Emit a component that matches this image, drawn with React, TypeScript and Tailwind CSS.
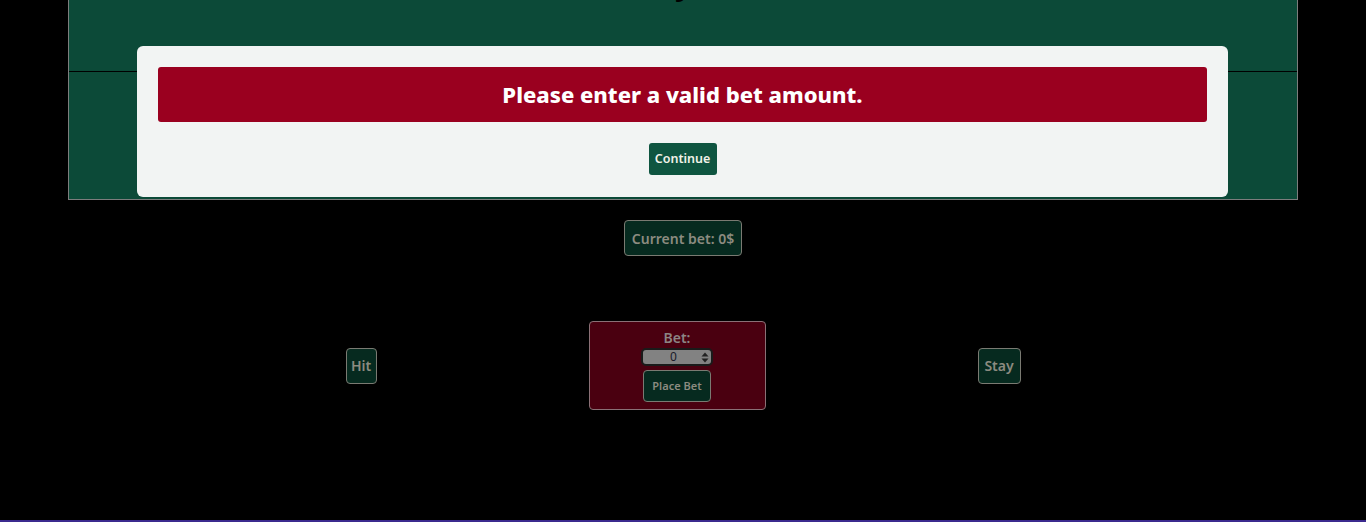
import { useState } from "react";

const font = { fontFamily: '"Noto Sans", "Open Sans", sans-serif' };

function Spinner() {
  return (
    <svg width="8" height="11" viewBox="0 0 8 11" className="shrink-0">
      <path d="M4 0.5 L7.5 4.5 H0.5 Z" fill="#222" />
      <path d="M4 10.5 L7.5 6.5 H0.5 Z" fill="#222" />
    </svg>
  );
}

export default function App() {
  const [bet] = useState(0);
  const [showModal, setShowModal] = useState(true);

  return (
    <div className="relative min-h-[522px] bg-black flex flex-col" style={font}>
      {/* table */}
      <div className="mx-[68px] h-[200px] bg-[#0c4a38] border-x border-b border-[#7d7d7d] flex flex-col">
        <div className="h-[72px] border-b border-black overflow-hidden">
          <h1 className="-mt-[34px] text-center text-[30px] font-bold text-black leading-[36px] pr-[10px]">
            Royal
          </h1>
        </div>
        <div className="flex-1" />
      </div>

      <div className="flex justify-center mt-[20px]">
        <div className="h-[36px] px-[7px] flex items-center rounded-[4px] border border-[#7a7a72] bg-[#062a1f] text-[#8c8b80] text-[14px] font-semibold">
          Current bet: {bet}$
        </div>
      </div>

      <div className="flex justify-center items-center gap-[212px] mt-[65px]">
        <button className="h-[36px] w-[31px] rounded-[4px] border border-[#7a7a72] bg-[#062a1f] text-[#8c8b80] text-[14px] font-semibold">
          Hit
        </button>
        <div className="w-[177px] h-[89px] rounded-[4px] border border-[#8a7076] bg-[#4a0010] flex flex-col items-center pt-[7px]">
          <span className="text-[14px] font-semibold text-[#8c8584] leading-[18px]">Bet:</span>
          <div className="mt-[1px] w-[72px] h-[18px] rounded-[5px] border-2 border-[#1a1a1a] bg-[#828282] flex items-center pl-[3px] pr-[2px]">
            <span className="flex-1 text-center text-[12px] text-[#1a1a2a] leading-none">0</span>
            <Spinner />
          </div>
          <button className="mt-[4px] w-[68px] h-[32px] rounded-[4px] border border-[#7a7a72] bg-[#062a1f] text-[#8c8b80] text-[11px] font-semibold">
            Place Bet
          </button>
        </div>
        <button className="h-[36px] w-[43px] rounded-[4px] border border-[#7a7a72] bg-[#062a1f] text-[#8c8b80] text-[14px] font-semibold">
          Stay
        </button>
      </div>

      <div className="mt-auto h-[2px] bg-[#3b2a8e]" />

      {showModal && (
        <div className="absolute left-[137px] right-[138px] top-[46px] h-[151px] rounded-[6px] bg-[#f2f4f3] px-[21px] pt-[21px] flex flex-col items-center">
          <div className="w-full h-[55px] rounded-[3px] bg-[#9a001f] flex items-center justify-center text-white text-[22px] font-extrabold">
            Please enter a valid bet amount.
          </div>
          <button
            onClick={() => setShowModal(false)}
            className="mt-[21px] w-[68px] h-[32px] rounded-[3px] bg-[#0f5540] text-[#f2f2e8] text-[12.5px] font-semibold"
          >
            Continue
          </button>
        </div>
      )}
    </div>
  );
}
